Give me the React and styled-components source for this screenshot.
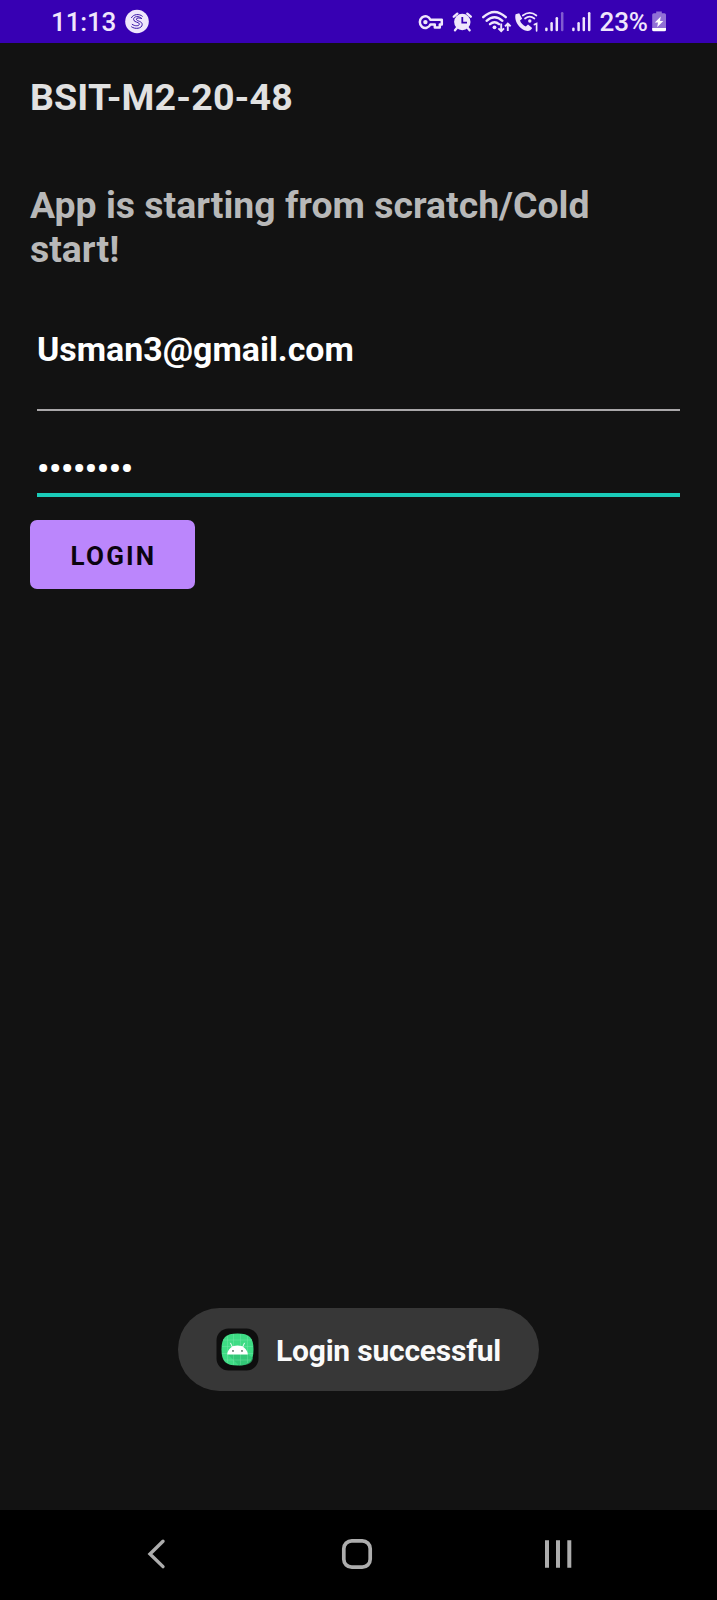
import React from "react";
import styled, { createGlobalStyle } from "styled-components";

const GlobalStyle = createGlobalStyle`
  * { box-sizing: border-box; }
  body { margin: 0; background: #121212; font-family: Roboto, "Liberation Sans", sans-serif; }
`;

const Screen = styled.div`
  width: 717px;
  height: 1600px;
  display: flex;
  flex-direction: column;
  background: #121212;
  overflow: hidden;
`;

const StatusBar = styled.header`
  height: 43px;
  flex: none;
  display: flex;
  align-items: flex-start;
  justify-content: space-between;
  padding: 0 50px 0 51px;
  background: #3700b3;
  color: #efe6fc;
`;

const StatusGroup = styled.div`
  display: flex;
  align-items: flex-start;
`;

const StatusText = styled.span`
  font-size: 26px;
  line-height: 44px;
  font-weight: 500;
  letter-spacing: -0.15px;
  width: ${(p) => p.$width}px;
  white-space: nowrap;
`;

const StatusIcon = styled.svg`
  display: block;
  flex: none;
  height: 43px;
  width: ${(p) => p.$width}px;
  margin-right: ${(p) => p.$gap || 0}px;
`;

const Content = styled.main`
  flex: 1;
  display: flex;
  flex-direction: column;
  align-items: flex-start;
  padding: 32px 30px 0;
`;

const Heading = styled.h1`
  margin: 0 0 64px;
  font-size: 37.5px;
  line-height: 44px;
  font-weight: 700;
  letter-spacing: 0.17px;
  color: #e1e1e1;
`;

const Message = styled.p`
  margin: 0 0 58px;
  width: 600px;
  font-size: 37.4px;
  line-height: 44px;
  font-weight: 700;
  color: #b8b8b8;
`;

const Field = styled.div`
  align-self: stretch;
  margin: 0 7px;
  height: ${(p) => p.$height}px;
  border-bottom: ${(p) => (p.$focused ? "4px solid #1accb9" : "2px solid #a9a7a9")};
  color: #fff;
  font-size: 33.9px;
  line-height: 40px;
  font-weight: 700;
  letter-spacing: ${(p) => p.$spacing || "0"};
  padding-top: ${(p) => p.$top || 0}px;
`;

const LoginButton = styled.button`
  margin: 23px 0 0;
  width: 165px;
  height: 69px;
  padding: 2px 0 0 2px;
  border: 0;
  border-radius: 7px;
  background: #bb86fc;
  color: #0b0410;
  font-family: inherit;
  font-size: 26px;
  font-weight: 700;
  letter-spacing: 2.2px;
`;

const Toast = styled.div`
  align-self: center;
  flex: none;
  display: flex;
  align-items: center;
  width: 361px;
  height: 83px;
  margin: auto 0 119px;
  padding-left: 38px;
  border-radius: 42px;
  background: #373737;
`;

const ToastText = styled.span`
  margin-left: 17px;
  padding-top: 2px;
  font-size: 30px;
  line-height: 36px;
  font-weight: 700;
  letter-spacing: -0.22px;
  color: #fafafa;
  white-space: nowrap;
`;

const NavBar = styled.nav`
  flex: none;
  height: 90px;
  display: flex;
  align-items: center;
  justify-content: space-between;
  padding: 0 144px 2px 140px;
  background: #000;
`;

const NavIcon = styled.svg`
  display: block;
  width: 32px;
  height: 32px;
  fill: none;
  stroke: #adadad;
`;

const LetterBadge = () => (
  <StatusIcon $width={26} viewBox="124 0 26 43">
    <circle cx="137" cy="21.5" r="11.8" fill="#efe6fc" />
    <g fill="none" stroke="#3a16a8" strokeWidth="1" strokeLinecap="round">
      <path d="M131.5 17.6C133 14.2 139.5 13.4 142.3 16.2" />
      <path d="M141.6 18.4C139 15.5 133.6 16.2 133.6 19.3C133.6 22.8 139.4 21.7 139.4 24C139.4 26.2 134.8 26.4 132.2 24.4" />
      <path d="M141.6 18.4C139.4 17.8 136.4 17.6 136.4 19.2C136.4 21.4 142.3 20.8 142.2 24.6C142 28.7 135 29.5 131.6 26.9" />
    </g>
  </StatusIcon>
);

const KeyIcon = () => (
  <StatusIcon $width={26} $gap={8} viewBox="418 0 26 43">
    <path
      d="M430.4 19.8A5.5 5.9 0 1 0 430.4 24.4H434.8V27.6H439.8V24.4H441.8V19.8Z"
      fill="none" stroke="#efe6fc" strokeWidth="2.5" strokeLinejoin="round"
    />
    <circle cx="425.4" cy="22.1" r="2.2" fill="#efe6fc" />
  </StatusIcon>
);

const AlarmIcon = () => (
  <StatusIcon $width={20} $gap={9} viewBox="452 0 20 43">
    <circle cx="462.3" cy="22" r="8.2" fill="#efe6fc" />
    <path d="M453.8 16.7L457.3 13.6M470.8 16.7L467.3 13.6M456.8 28L455 30.3M467.8 28L469.6 30.3" stroke="#efe6fc" strokeWidth="2.3" strokeLinecap="round" />
    <path d="M462.3 17V22.6H467" fill="none" stroke="#3700b3" strokeWidth="1.8" />
  </StatusIcon>
);

const WifiIcon = () => (
  <StatusIcon $width={31} $gap={2} viewBox="481 0 31 43">
    <g fill="none" stroke="#efe6fc" strokeWidth="2.4" strokeLinecap="round">
      <path d="M483.2 17.2Q494.5 6.8 505.8 17.2" />
      <path d="M486.6 20.8Q494.5 13.6 502.4 20.8" />
      <path d="M490 24.2Q494.5 20.4 499 24.2" />
    </g>
    <circle cx="494.5" cy="27.3" r="1.9" fill="#efe6fc" />
    <path d="M501.2 23.5V31M498.4 28.3L501.2 31.2L504 28.3M507.8 31V23.8M505 26.4L507.8 23.5L510.6 26.4" fill="none" stroke="#efe6fc" strokeWidth="1.9" />
  </StatusIcon>
);

const WifiCallIcon = () => (
  <StatusIcon $width={25} $gap={6} viewBox="514 0 25 43">
    <path
      d="M515.6 14.2L519.2 13.2L522.2 18.7L520 20.6C520.8 23.2 523.2 25.6 525.8 26.6L528 24.5L532.2 28.1C530.6 31.4 527.4 31.6 524.4 30.2C518.6 27.2 513.9 20.6 515.6 14.2Z"
      fill="#efe6fc"
    />
    <g fill="none" stroke="#efe6fc" strokeWidth="1.7" strokeLinecap="round">
      <path d="M522.8 15.5Q529.8 10.3 536.4 15.5" />
      <path d="M525 18.5Q529.7 14.8 534.4 18.5" />
      <path d="M534.4 24.6L536.6 23.6V30.8" />
    </g>
    <circle cx="529.8" cy="21" r="1.7" fill="#efe6fc" />
  </StatusIcon>
);

const SignalIcon = ({ weak, gap }) => (
  <StatusIcon $width={20} $gap={gap} viewBox="0 0 20 43">
    <g stroke="#efe6fc" strokeWidth="2.5" strokeLinecap="round">
      <path d="M1.4 28.8V30" />
      <path d="M6.6 23.2V30" />
      <path d="M11.8 18.2V30" />
      <path d="M17.2 13.2V30" opacity={weak ? 0.4 : 1} />
    </g>
  </StatusIcon>
);

const BatteryIcon = () => (
  <StatusIcon $width={16} viewBox="651 0 16 43">
    <path d="M656.2 11.5H661.8V13.2H664.4Q666 13.2 666 14.8V29.4Q666 31 664.4 31H653.8Q652.2 31 652.2 29.4V14.8Q652.2 13.2 653.8 13.2H656.2Z" fill="#9170d6" />
    <path d="M652.2 28H666V29.4Q666 31.3 664.4 31.3H653.8Q652.2 31.3 652.2 29.4Z" fill="#fff" />
    <path d="M660.8 16.5L654.8 22.6H658L657.2 27.2L663.3 20.9H660Z" fill="#fff" />
  </StatusIcon>
);

const AppIcon = () => (
  <svg width="43" height="43" viewBox="0 0 43 43">
    <rect x="0.5" y="0.5" width="42" height="42" rx="12" fill="#0e0e0e" />
    <path d="M21.5 5.5C33.5 5.5 37.5 9.5 37.5 21.5S33.5 37.5 21.5 37.5S5.5 33.5 5.5 21.5S9.5 5.5 21.5 5.5Z" fill="#3ddc84" />
    <path d="M12 26.5H32L37 30C36 35.5 32 37.5 23 37.5Z" fill="#2fbd72" opacity="0.7" />
    <path d="M11.5 8V35M17.5 6V37M24.5 6V37M31.5 8V35M7 12H36M6 18.5H37M6 25.5H37M8 32H35" stroke="#a5f3c8" strokeWidth="0.5" opacity="0.5" />
    <path d="M11.2 26.4C11.8 21 16 17.6 21.5 17.6S31.2 21 31.8 26.4Z" fill="#fff" />
    <path d="M16.5 19.3L14.6 15.2M26.5 19.3L28.4 15.2" stroke="#fff" strokeWidth="0.9" strokeLinecap="round" />
    <circle cx="17" cy="22.9" r="0.9" fill="#4a6758" />
    <circle cx="26" cy="22.9" r="0.9" fill="#4a6758" />
  </svg>
);

export default function App() {
  return (
    <Screen>
      <GlobalStyle />
      <StatusBar>
        <StatusGroup>
          <StatusText $width={73}>11:13</StatusText>
          <LetterBadge />
        </StatusGroup>
        <StatusGroup>
          <KeyIcon />
          <AlarmIcon />
          <WifiIcon />
          <WifiCallIcon />
          <SignalIcon weak gap={7} />
          <SignalIcon gap={7.5} />
          <StatusText $width={51.5}>23%</StatusText>
          <BatteryIcon />
        </StatusGroup>
      </StatusBar>
      <Content>
        <Heading>BSIT-M2-20-48</Heading>
        <Message>App is starting from scratch/Cold start!</Message>
        <Field $height={82} $top={1}>Usman3@gmail.com</Field>
        <Field $height={86} $top={38} $spacing="-0.22px" $focused>••••••••</Field>
        <LoginButton type="button">LOGIN</LoginButton>
        <Toast role="status">
          <AppIcon />
          <ToastText>Login successful</ToastText>
        </Toast>
      </Content>
      <NavBar>
        <NavIcon viewBox="0 0 32 32">
          <path d="M23 3.2L10 16L23 28.6" strokeWidth="3.4" strokeLinecap="round" strokeLinejoin="miter" />
        </NavIcon>
        <NavIcon viewBox="0 0 32 32">
          <rect x="2.8" y="2.8" width="26.4" height="26.4" rx="8" strokeWidth="3.7" />
        </NavIcon>
        <NavIcon viewBox="0 0 32 32">
          <path d="M6 2.2V29.8M17 2.2V29.8M28.3 2.2V29.8" strokeWidth="4" />
        </NavIcon>
      </NavBar>
    </Screen>
  );
}
